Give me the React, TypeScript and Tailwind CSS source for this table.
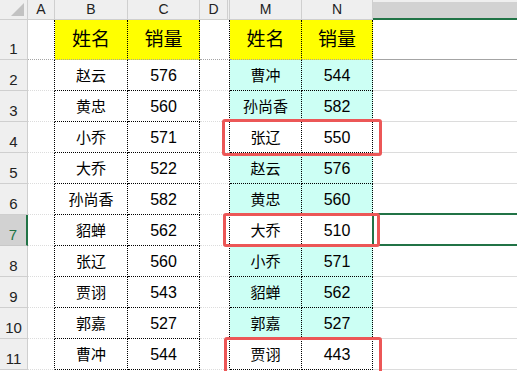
import React from 'react';

const leftRows: [string, string][] = [
  ['赵云', '576'], ['黄忠', '560'], ['小乔', '571'], ['大乔', '522'], ['孙尚香', '582'],
  ['貂蝉', '562'], ['张辽', '560'], ['贾诩', '543'], ['郭嘉', '527'], ['曹冲', '544'],
];

const rightRows: [string, string, boolean][] = [
  ['曹冲', '544', true], ['孙尚香', '582', true], ['张辽', '550', false], ['赵云', '576', true], ['黄忠', '560', true],
  ['大乔', '510', false], ['小乔', '571', true], ['貂蝉', '562', true], ['郭嘉', '527', true], ['贾诩', '443', false],
];

const font = { fontFamily: '"Liberation Sans", "Noto Sans CJK SC", sans-serif' };

function ColHead({ label, className = '' }: { label: string; className?: string }) {
  return (
    <div className={`flex items-center justify-center bg-[#efefef] border-b border-r border-[#cfcfcf] text-[14px] text-[#222] ${className}`}>
      {label}
    </div>
  );
}

function RowHead({ n, selected }: { n: number; selected?: boolean }) {
  return (
    <div
      className={
        selected
          ? 'flex items-end justify-center pb-[2px] leading-[16px] bg-[#d2d2d2] border-b border-[#c8c8c8] border-r-2 border-r-[#217346] text-[15px] text-[#217346]'
          : 'flex items-end justify-center pb-[2px] leading-[16px] bg-[#efefef] border-b border-r border-[#cfcfcf] text-[15px] text-[#222]'
      }
    >
      {n}
    </div>
  );
}

export default function App() {
  const rows = Array.from({ length: 11 }, (_, i) => i + 1);

  return (
    <div className="relative w-[517px] h-[371px] overflow-hidden bg-white text-black" style={font}>
      <div className="grid grid-cols-[28px_27px_73px_72px_30px_72px_71px_1fr] grid-rows-[20px_40px_repeat(10,31px)]">
        {/* header row */}
        <div className="relative bg-[#efefef] border-b border-r border-[#cfcfcf]">
          <div className="absolute right-[3px] bottom-[3px] w-0 h-0 border-l-[13px] border-l-transparent border-b-[13px] border-b-[#c2c2c2]" />
        </div>
        <ColHead label="A" />
        <ColHead label="B" />
        <ColHead label="C" />
        <ColHead label="D" className="border-r-[3px] border-r-[#cfcfcf] border-double" />
        <ColHead label="M" />
        <ColHead label="N" />
        <div className="bg-[#d2d2d2] border-t-2 border-t-[#efefef] border-b-2 border-b-[#217346]" />

        {rows.map((r) => {
          const isHead = r === 1;
          const bottom = isHead ? 'border-b border-b-[#a4a4a4]' : 'border-b border-b-[#dcdcdc]';
          const bottomDot = isHead ? 'border-b border-b-[#a4a4a4]' : 'border-b border-dotted border-b-black';
          const left = leftRows[r - 2];
          const right = rightRows[r - 2];
          const fill = isHead ? 'bg-[#ffff00]' : right && right[2] ? 'bg-[#ccfff4]' : 'bg-white';
          const txt = isHead ? 'text-[19px]' : 'text-[15px]';
          const num = isHead ? 'text-[19px]' : 'text-[16px]';
          return (
            <React.Fragment key={r}>
              <RowHead n={r} selected={r === 7} />
              <div className={`border-r border-dotted border-r-black ${bottom}`} />
              <div className={`flex items-center justify-center pt-[2px] border-r border-dotted border-r-black ${bottomDot} ${isHead ? 'bg-[#ffff00]' : 'bg-white'} ${txt}`}>
                {isHead ? '姓名' : left[0]}
              </div>
              <div className={`flex items-center justify-center pt-[2px] border-r border-dotted border-r-black ${bottomDot} ${isHead ? 'bg-[#ffff00]' : 'bg-white'} ${num}`}>
                {isHead ? '销量' : left[1]}
              </div>
              <div className={`border-r border-dotted border-r-black ${bottom}`} />
              <div className={`flex items-center justify-center pt-[2px] border-r border-dotted border-r-black ${bottomDot} ${fill} ${txt}`}>
                {isHead ? '姓名' : right[0]}
              </div>
              <div className={`flex items-center justify-center pt-[2px] border-r border-dotted border-r-black ${bottomDot} ${fill} ${num}`}>
                {isHead ? '销量' : right[1]}
              </div>
              <div className={`relative ${bottom}`}>
                {r === 7 && (
                  <div className="absolute -left-[1px] -top-[2px] -right-[4px] -bottom-[1px] border-2 border-r-0 border-[#217346]" />
                )}
              </div>
            </React.Fragment>
          );
        })}
      </div>

      {/* highlight boxes */}
      <div className="absolute left-[222px] top-[119px] w-[160px] h-[37px] border-[3px] border-[#ec5757] rounded-[3px]" />
      <div className="absolute left-[223px] top-[213px] w-[157px] h-[34px] border-[3px] border-[#ec5757] rounded-[3px]" />
      <div className="absolute left-[224px] top-[337px] w-[158px] h-[40px] border-[3px] border-[#ec5757] rounded-[3px]" />
    </div>
  );
}
